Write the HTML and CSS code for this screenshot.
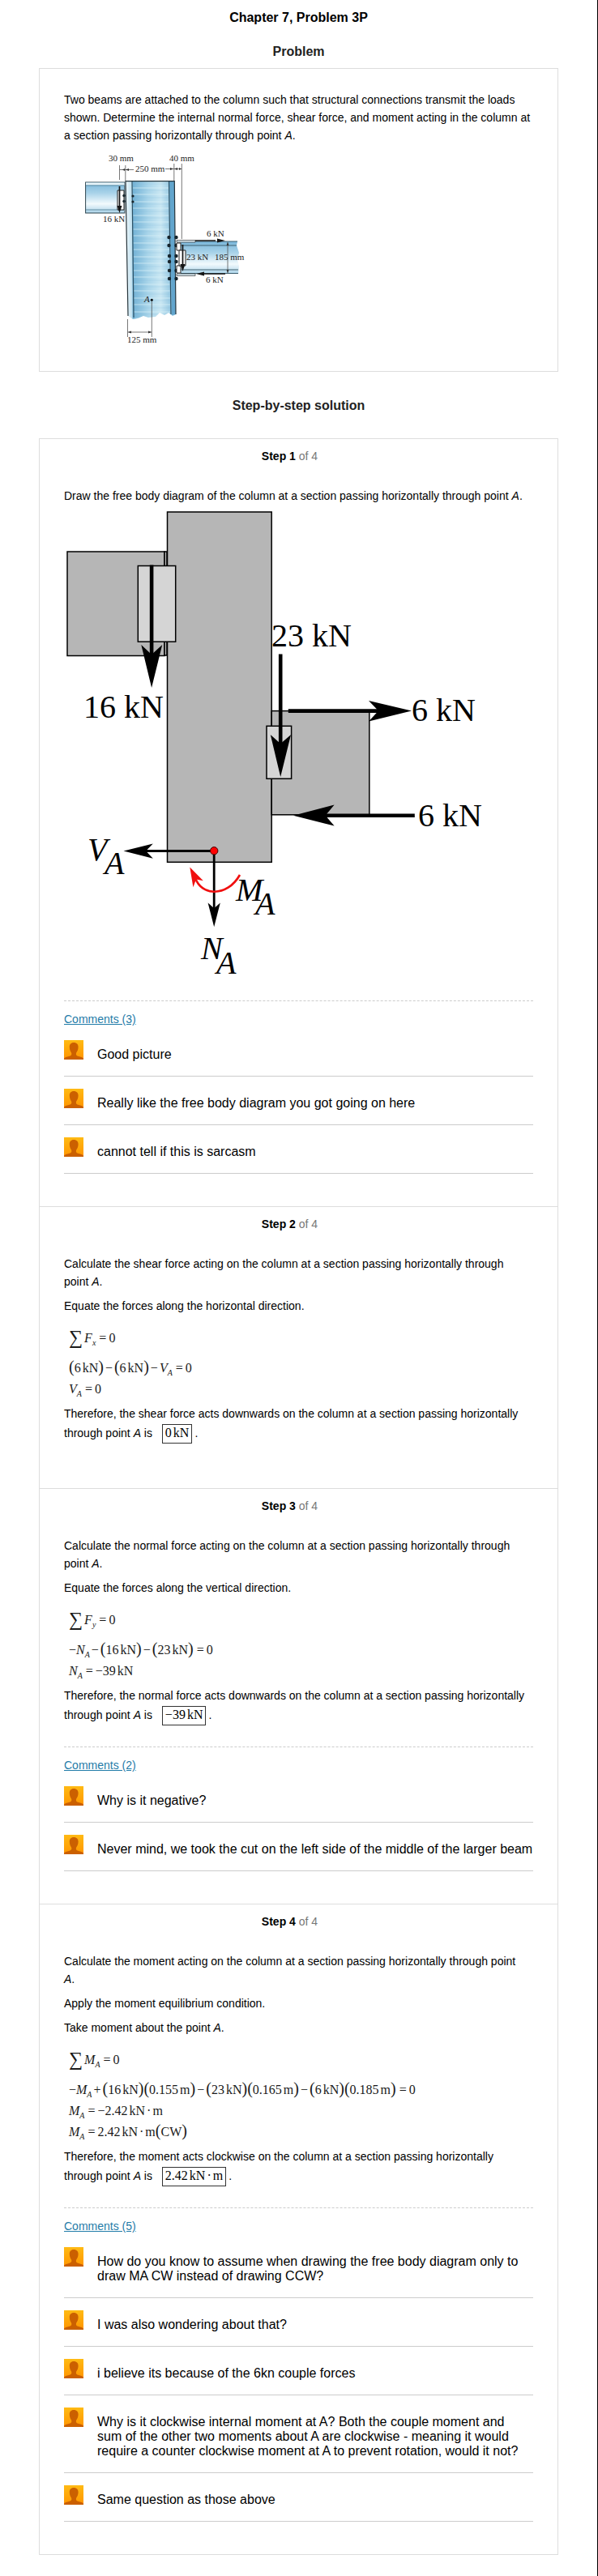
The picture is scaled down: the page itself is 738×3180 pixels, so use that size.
FILE: index.html
```html
<!DOCTYPE html>
<html lang="en">
<head>
<meta charset="utf-8">
<meta name="viewport" content="width=device-width, initial-scale=1">
<title>Chapter 7, Problem 3P</title>
<link rel="stylesheet" href="styles.css">
</head>
<body>
<svg class="defs" aria-hidden="true" width="0" height="0">
  <defs>
    <linearGradient id="orange" x1="0" y1="0" x2="0" y2="1"><stop offset="0" stop-color="#ffba14"/><stop offset="1" stop-color="#ff9500"/></linearGradient>
    <symbol id="avatar" viewBox="0 0 24 24">
      <rect width="24" height="24" fill="url(#orange)"/>
      <path d="M12 3C8.600 3 6.800 5.300 6.800 8.500C6.800 12 8.200 14.300 9.200 16C9.800 18.500 8.500 19.200 6 20C3.500 20.700 1 21.300 0 22.500V24H24V22.500C23 21.300 20.500 20.700 18 20C15.500 19.200 14.400 18.500 15 16C16 14.300 17.600 12 17.600 8.500C17.600 5.300 15.600 3 12 3Z" fill="#cb6000"/>
    </symbol>
  </defs>
</svg>
<main class="page">
  <h1 class="title">Chapter 7, Problem 3P</h1>
  <h2 class="heading">Problem</h2>
  <section class="card problem">
    <p class="text">Two beams are attached to the column such that structural connections transmit the loads shown. Determine the internal normal force, shear force, and moment acting in the column at a section passing horizontally through point <i>A</i>.</p>
    <svg class="figure figure-small" viewBox="9 8 250 250" role="img" aria-label="Column with two attached beams and their loads">
      <defs>
        <linearGradient id="col" x1="0" y1="0" x2="1" y2="0"><stop offset="0" stop-color="#eef8fc"/><stop offset=".12" stop-color="#c4e2f0"/><stop offset=".15" stop-color="#74b3d6"/><stop offset=".45" stop-color="#a9d5ea"/><stop offset=".7" stop-color="#c9e7f3"/><stop offset="1" stop-color="#7db9da"/></linearGradient>
        <linearGradient id="beam" x1="0" y1="0" x2="0" y2="1"><stop offset="0" stop-color="#79b6da"/><stop offset=".35" stop-color="#a9d3e9"/><stop offset=".7" stop-color="#f2fafd"/><stop offset="1" stop-color="#a8d2e8"/></linearGradient>
        <pattern id="lines" width="60" height="17" patternUnits="userSpaceOnUse"><path d="M0 2H60M0 11H60" stroke="#d9f0f7" stroke-width="1"/><path d="M0 6H60M0 14H60" stroke="#71b0d5" stroke-width="1" opacity=".3"/></pattern>
      </defs>
      <rect x="35.600" y="55" width="48.300" height="38" fill="url(#beam)" stroke="#31464f"/>
      <rect x="36" y="55.500" width="47.500" height="3" fill="#e9f5fa"/><path d="M36 59H83M36 89H83" stroke="#5f8ca3"/>
      <path d="M85 53.700H145.300L147 218L143 220L138 216L133 219L127 216L122 221L113 222L107 220L100 223L94 224L88 220Z" fill="url(#col)"/>
      <path d="M94 54H138L140 216L133 219L127 216L122 221L113 222L107 220L100 223L95 222Z" fill="url(#lines)" opacity=".7"/>
      <path d="M139 54H145L147 218L142 219Z" fill="#62a5cd"/>
      <path d="M88 220L85 53.700H145.300L147 218" fill="none" stroke="#27353c" stroke-width="1.200"/>
      <path d="M93 54L95 222M138.500 54L141 218" stroke="#2c5064" stroke-width="1.200"/>
      <path d="M75 65H83V89H75Z" fill="#fff" stroke="#222" stroke-width="1"/>
      <g fill="#17252c"><circle cx="83" cy="71.500" r="1.700"/><circle cx="83" cy="78.500" r="1.700"/><circle cx="94" cy="72" r="1.600"/><circle cx="94" cy="79" r="1.600"/>
        <circle cx="138.500" cy="123" r="2.200"/><circle cx="138.500" cy="133" r="2.200"/><circle cx="139" cy="146" r="2.200"/><circle cx="139" cy="153" r="2.200"/><circle cx="139" cy="164" r="2.200"/><circle cx="139" cy="174" r="2.200"/>
        <circle cx="147.500" cy="123" r="2.200"/><circle cx="147.500" cy="133" r="2.200"/><circle cx="147.500" cy="146" r="2.200"/><circle cx="147.500" cy="153" r="2.200"/><circle cx="147.500" cy="164" r="2.200"/><circle cx="147.500" cy="174" r="2.200"/></g>
      <path d="M153 128H223L222 133L225 142L223 151L225 158L224 168H153Z" fill="url(#beam)"/>
      <path d="M171 128H223M153 133H222M153 163H224M153 167.500H224" stroke="#3e6070"/>
      <path d="M148 126.500H171V129H148ZM148 168H171V170.500H148Z" fill="#dceef6" stroke="#333" stroke-width=".7"/>
      <path d="M148 130H153V139H148ZM148 158H153V167H148Z" fill="#fff" stroke="#222" stroke-width="1"/>
      <path d="M151 139H159V158H151Z" fill="#fff" stroke="#222" stroke-width="1"/>
      <path d="M77.500 60V88M155.500 132V160M171 127H196M179 168H208" stroke="#151515" stroke-width="1.700"/>
      <path d="M74.500 84H80.500L77.500 93ZM152.500 156H158.500L155.500 165ZM198 124.500V129.500L208 127ZM182 165.500V170.500L172 168Z" fill="#151515"/>
      <path d="M77.500 34V52M84.800 34V53M144.800 32V53M154.300 32V125M77.500 39.500H95M134 38.500H154M87.500 224V246M117.300 202V246M88 240H117M211 129V167" fill="none" stroke="#555" stroke-width=".8"/>
      <path d="M84 38L81 39.500L84 41ZM85 39.500L89 38V41ZM144 38.500L140 37V40ZM145 38.500L149 37V40ZM154 38.500L151 37V40ZM88 240L92 238.500V241.500ZM117 240L113 238.500V241.500ZM211 129L209.500 133H212.500ZM211 167L209.500 163H212.500Z" fill="#333"/>
      <circle cx="117.300" cy="200.300" r="1.500"/>
      <g class="label-small"><text x="64" y="29">30 mm</text><text x="139" y="29">40 mm</text><text x="97" y="42">250 mm</text><text x="57" y="104">16 kN</text><text x="185" y="122">6 kN</text><text x="160" y="151">23 kN</text><text x="195" y="151">185 mm</text><text x="184" y="179">6 kN</text><text x="108" y="203" font-style="italic">A</text><text x="87" y="253">125 mm</text></g>
    </svg>
  </section>

  <h2 class="heading heading-solution">Step-by-step solution</h2>
  <div class="card steps">
    <section class="step">
      <h3 class="step-title">Step 1 <span class="step-total">of 4</span></h3>
      <p class="text">Draw the free body diagram of the column at a section passing horizontally through point <i>A</i>.</p>
      <svg class="figure figure-large" viewBox="9 3 578 592" role="img" aria-label="Free body diagram of the column">
        <g fill="#b6b6b6" stroke="#000" stroke-width="1.500">
          <rect x="13" y="61" width="120" height="128.500"/>
          <path d="M133 61H136V189H133Z"/>
          <rect x="136.500" y="12" width="128.700" height="432.300"/>
          <rect x="265.200" y="257.600" width="120.600" height="128.200"/>
          <rect x="100.300" y="78.500" width="46.400" height="93.700" fill="#d5d5d5"/>
          <rect x="259" y="276.300" width="30.600" height="65" fill="#d5d5d5"/>
        </g>
        <path d="M117.100 77.500V195M276.200 187.500V302M285.800 257.600H400M441.800 386.700H327" stroke="#000" stroke-width="4.600"/>
        <path d="M117.100 229L104.300 176L117.100 188L130.200 176ZM276.200 339L263.800 287L276.200 298L289 287ZM438 257.600L385 245L397 257.600L385 270.600ZM292 386.700L342.600 373.500L331.600 386.700L342.600 399.600Z"/>
        <path d="M194.200 430.500H106M194.200 430.500V504" stroke="#000" stroke-width="2.800"/>
        <path d="M82.500 430.500L118.800 421.400L110 430.500L118.800 439.700ZM194.200 524.300L186.600 494.500L194.200 501.300L201.800 494.500Z"/>
        <path d="M226 460C218 474 206 481 194 480.700C184 480.500 175 475 171 464" fill="none" stroke="#f00f0f" stroke-width="2.600"/>
        <path d="M164.300 450.400L180.800 467.300L172 465.500L168.400 475.300Z" fill="#f00f0f"/>
        <circle cx="194.200" cy="430.300" r="4.700" fill="#f00" stroke="#400" stroke-width="1"/>
        <g class="label-large"><text x="33" y="266">16 kN</text><text x="265" y="178">23 kN</text><text x="438" y="270">6 kN</text><text x="446" y="400">6 kN</text>
          <g font-style="italic"><text x="38" y="442">V</text><text x="59" y="459">A</text><text x="221" y="492">M</text><text x="245" y="509">A</text><text x="178" y="564">N</text><text x="197" y="582">A</text></g></g>
      </svg>
      <div class="comments">
        <a class="comments-link" href="#">Comments (3)</a>
        <ul class="comment-list">
          <li class="comment"><svg class="avatar" aria-hidden="true"><use href="#avatar"/></svg><p class="comment-text">Good picture</p></li>
          <li class="comment"><svg class="avatar" aria-hidden="true"><use href="#avatar"/></svg><p class="comment-text">Really like the free body diagram you got going on here</p></li>
          <li class="comment"><svg class="avatar" aria-hidden="true"><use href="#avatar"/></svg><p class="comment-text">cannot tell if this is sarcasm</p></li>
        </ul>
      </div>
    </section>

    <section class="step">
      <h3 class="step-title">Step 2 <span class="step-total">of 4</span></h3>
      <p class="text">Calculate the shear force acting on the column at a section passing horizontally through<br>point <i>A</i>.</p>
      <p class="text">Equate the forces along the horizontal direction.</p>
      <div class="eq eq-sum"><span class="sigma">∑</span><i>F</i><sub>x</sub><span class="equals">=</span>0</div>
      <div class="eq-group">
        <div class="eq"><span class="paren">(</span>6<span class="unit">kN</span><span class="paren">)</span><span class="op">−</span><span class="paren">(</span>6<span class="unit">kN</span><span class="paren">)</span><span class="op">−</span><i>V</i><sub>A</sub><span class="equals">=</span>0</div>
        <div class="eq"><i>V</i><sub>A</sub><span class="equals">=</span>0</div>
      </div>
      <p class="answer">Therefore, the shear force acts downwards on the column at a section passing horizontally through point <i>A</i> is <span class="result">0<span class="unit">kN</span></span>.</p>
    </section>

    <section class="step">
      <h3 class="step-title">Step 3 <span class="step-total">of 4</span></h3>
      <p class="text">Calculate the normal force acting on the column at a section passing horizontally through<br>point <i>A</i>.</p>
      <p class="text">Equate the forces along the vertical direction.</p>
      <div class="eq eq-sum"><span class="sigma">∑</span><i>F</i><sub>y</sub><span class="equals">=</span>0</div>
      <div class="eq-group">
        <div class="eq">−<i>N</i><sub>A</sub><span class="op">−</span><span class="paren">(</span>16<span class="unit">kN</span><span class="paren">)</span><span class="op">−</span><span class="paren">(</span>23<span class="unit">kN</span><span class="paren">)</span><span class="equals">=</span>0</div>
        <div class="eq"><i>N</i><sub>A</sub><span class="equals">=</span>−39<span class="unit">kN</span></div>
      </div>
      <p class="answer">Therefore, the normal force acts downwards on the column at a section passing horizontally through point <i>A</i> is <span class="result">−39<span class="unit">kN</span></span>.</p>
      <div class="comments">
        <a class="comments-link" href="#">Comments (2)</a>
        <ul class="comment-list">
          <li class="comment"><svg class="avatar" aria-hidden="true"><use href="#avatar"/></svg><p class="comment-text">Why is it negative?</p></li>
          <li class="comment"><svg class="avatar" aria-hidden="true"><use href="#avatar"/></svg><p class="comment-text">Never mind, we took the cut on the left side of the middle of the larger beam</p></li>
        </ul>
      </div>
    </section>

    <section class="step">
      <h3 class="step-title">Step 4 <span class="step-total">of 4</span></h3>
      <p class="text">Calculate the moment acting on the column at a section passing horizontally through point<br><i>A</i>.</p>
      <p class="text">Apply the moment equilibrium condition.</p>
      <p class="text">Take moment about the point <i>A</i>.</p>
      <div class="eq eq-sum"><span class="sigma">∑</span><i>M</i><sub>A</sub><span class="equals">=</span>0</div>
      <div class="eq-group">
        <div class="eq">−<i>M</i><sub>A</sub><span class="op">+</span><span class="paren">(</span>16<span class="unit">kN</span><span class="paren">)</span><span class="paren">(</span>0.155<span class="unit">m</span><span class="paren">)</span><span class="op">−</span><span class="paren">(</span>23<span class="unit">kN</span><span class="paren">)</span><span class="paren">(</span>0.165<span class="unit">m</span><span class="paren">)</span><span class="op">−</span><span class="paren">(</span>6<span class="unit">kN</span><span class="paren">)</span><span class="paren">(</span>0.185<span class="unit">m</span><span class="paren">)</span><span class="equals">=</span>0</div>
        <div class="eq"><i>M</i><sub>A</sub><span class="equals">=</span>−2.42<span class="unit">kN</span><span class="op">·</span>m</div>
        <div class="eq"><i>M</i><sub>A</sub><span class="equals">=</span>2.42<span class="unit">kN</span><span class="op">·</span>m<span class="paren">(</span>CW<span class="paren">)</span></div>
      </div>
      <p class="answer">Therefore, the moment acts clockwise on the column at a section passing horizontally<br>through point <i>A</i> is <span class="result">2.42<span class="unit">kN</span><span class="op">·</span>m</span>.</p>
      <div class="comments">
        <a class="comments-link" href="#">Comments (5)</a>
        <ul class="comment-list">
          <li class="comment"><svg class="avatar" aria-hidden="true"><use href="#avatar"/></svg><p class="comment-text">How do you know to assume when drawing the free body diagram only to draw MA CW instead of drawing CCW?</p></li>
          <li class="comment"><svg class="avatar" aria-hidden="true"><use href="#avatar"/></svg><p class="comment-text">I was also wondering about that?</p></li>
          <li class="comment"><svg class="avatar" aria-hidden="true"><use href="#avatar"/></svg><p class="comment-text">i believe its because of the 6kn couple forces</p></li>
          <li class="comment"><svg class="avatar" aria-hidden="true"><use href="#avatar"/></svg><p class="comment-text">Why is it clockwise internal moment at A? Both the couple moment and<br>sum of the other two moments about A are clockwise - meaning it would<br>require a counter clockwise moment at A to prevent rotation, would it not?</p></li>
          <li class="comment"><svg class="avatar" aria-hidden="true"><use href="#avatar"/></svg><p class="comment-text">Same question as those above</p></li>
        </ul>
      </div>
    </section>
  </div>
</main>
</body>
</html>
```

FILE: styles.css
```css
* {
  box-sizing: border-box;
}

body {
  margin: 0;
  background: #fff;
  color: #000;
  font-family: "Liberation Sans", Arial, sans-serif;
  font-size: 14px;
  line-height: 22px;
}

h1, h2, h3, p, ul {
  margin: 0;
  padding: 0;
}

.defs {
  display: block;
}

.page {
  min-height: 100vh;
  padding: 12px 48px 26px;
  border-right: 1px solid #000;
}

.title,
.heading {
  font-size: 16px;
  line-height: 20px;
  font-weight: bold;
  text-align: center;
}

.heading {
  margin: 22px 0 10px;
  color: #222;
}

.heading-solution {
  margin: 32px 0 30px;
}

.card {
  border: 1px solid #ddd;
}

.problem {
  padding: 27px 30px 30px;
}

.steps {
  border-top: 0;
}

.step {
  padding: 10px 30px 29px;
  border-top: 1px solid #ddd;
}

.step-title {
  margin-bottom: 27px;
  padding-right: 22px;
  font-size: 14px;
  line-height: 22px;
  text-align: center;
}

.step-total {
  color: #777;
  font-weight: normal;
}

.text + .text {
  margin-top: 8px;
}

.figure {
  display: block;
  max-width: 100%;
  height: auto;
}

.figure-small {
  width: 250px;
}

.figure-large {
  width: 578px;
  margin-bottom: 20px;
}

.label-small,
.label-large,
.eq,
.result {
  font-family: "Liberation Serif", "Times New Roman", serif;
}

.label-small {
  font-size: 11px;
  fill: #222;
}

.label-large {
  font-size: 40px;
}

.eq {
  padding-left: 6px;
  font-size: 16px;
  line-height: 26px;
  height: 26px;
  color: #1a1a1a;
}

.eq sub {
  font-size: 10px;
  font-style: italic;
  line-height: 1;
  vertical-align: -4px;
}

.eq-sum {
  height: 42px;
  margin-top: 8px;
  line-height: 42px;
}

.eq-group {
  padding: 3px 0 5px;
}

.sigma {
  margin-right: 2px;
  font-size: 24px;
  line-height: 1;
  vertical-align: -2px;
}

.paren {
  font-size: 20px;
  line-height: 1;
}

.unit {
  margin-left: 2px;
}

.op {
  margin: 0 2px;
}

.equals {
  margin: 0 3px 0 4px;
}

.answer {
  margin-bottom: 26px;
  line-height: 24px;
}

.result {
  display: inline-block;
  margin: 0 3px 0 8px;
  padding: 0 3px 2px;
  border: 1px solid #333;
  font-size: 16px;
  line-height: 20px;
}

.comments {
  padding-top: 11px;
  margin-bottom: 11px;
  border-top: 1px dashed #ccc;
}

.comments-link {
  display: block;
  width: fit-content;
  color: #1f7ba8;
}

.comment-list {
  list-style: none;
}

.comment {
  display: flex;
  align-items: flex-start;
  gap: 17px;
  padding: 15px 0 17px;
  border-bottom: 1px solid #ccc;
}

.avatar {
  flex: none;
  width: 24px;
  height: 24px;
}

.comment-text {
  padding-top: 9px;
  font-size: 16px;
  line-height: 18px;
}
```
